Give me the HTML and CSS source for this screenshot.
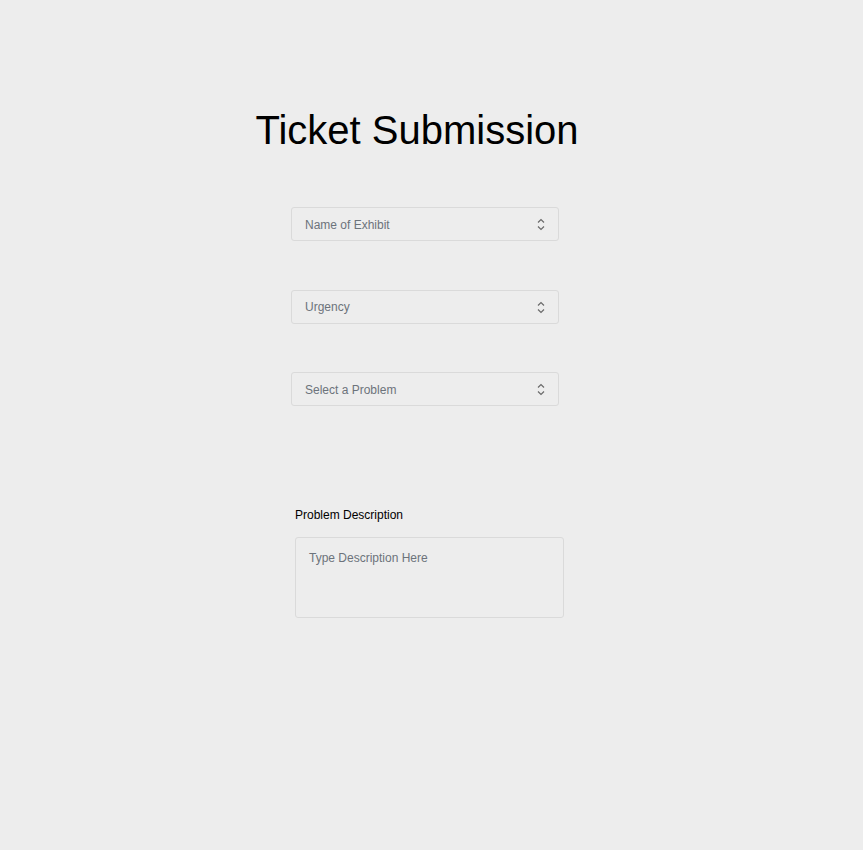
FILE: index.html
```html
<!DOCTYPE html>
<html lang="en">
<head>
<meta charset="utf-8">
<title>Ticket Submission</title>
<link rel="stylesheet" href="styles.css">
</head>
<body>
<main class="page">
  <h1 class="title">Ticket Submission</h1>
  <form class="form">
    <div class="select-wrap">
      <select class="select"><option>Name of Exhibit</option></select>
      <svg class="chev" width="8" height="13" viewBox="0 0 8 13"><polyline points="1,4.5 4,1.5 7,4.5"/><polyline points="1,8.5 4,11.5 7,8.5"/></svg>
    </div>
    <div class="select-wrap">
      <select class="select"><option>Urgency</option></select>
      <svg class="chev" width="8" height="13" viewBox="0 0 8 13"><polyline points="1,4.5 4,1.5 7,4.5"/><polyline points="1,8.5 4,11.5 7,8.5"/></svg>
    </div>
    <div class="select-wrap">
      <select class="select"><option>Select a Problem</option></select>
      <svg class="chev" width="8" height="13" viewBox="0 0 8 13"><polyline points="1,4.5 4,1.5 7,4.5"/><polyline points="1,8.5 4,11.5 7,8.5"/></svg>
    </div>
    <div class="desc">
      <label class="label" for="desc">Problem Description</label>
      <textarea id="desc" class="textarea" placeholder="Type Description Here"></textarea>
    </div>
  </form>
</main>
</body>
</html>
```

FILE: styles.css
```css
html, body {
  margin: 0;
  padding: 0;
  background: #ededed;
  font-family: "Liberation Sans", Arial, sans-serif;
}
.page {
  width: 834px;
  padding-top: 107px;
}
.title {
  margin: 0;
  font-weight: 400;
  font-size: 40px;
  line-height: 46px;
  color: #000;
  text-align: center;
}
.form {
  margin: 54px 0 0 291px;
  width: 272px;
  display: flex;
  flex-direction: column;
  gap: 48.5px;
}
.select-wrap {
  position: relative;
  width: 268px;
}
.select {
  appearance: none;
  -webkit-appearance: none;
  display: block;
  box-sizing: border-box;
  width: 268px;
  height: 34px;
  margin: 0;
  padding: 1px 30px 0 13px;
  border: 1px solid #dadada;
  border-radius: 3px;
  background: #ededed;
  font-family: "Liberation Sans", Arial, sans-serif;
  font-size: 12px;
  color: #6c737b;
  outline: none;
}
.chev {
  position: absolute;
  right: 14px;
  top: 11px;
  pointer-events: none;
  fill: none;
  stroke: #6a6a6a;
  stroke-width: 1.2;
}
.desc {
  margin-top: 53px;
  padding-left: 4px;
  display: flex;
  flex-direction: column;
}
.label {
  font-size: 12px;
  line-height: 14px;
  color: #000;
  margin-bottom: 15px;
}
.textarea {
  box-sizing: border-box;
  width: 269px;
  height: 81px;
  margin: 0;
  padding: 11px 13px;
  border: 1px solid #dadada;
  border-radius: 3px;
  background: #ededed;
  font-family: "Liberation Sans", Arial, sans-serif;
  font-size: 12px;
  line-height: 18px;
  color: #333;
  resize: none;
  outline: none;
}
.textarea::placeholder {
  color: #6c737b;
  opacity: 1;
}
```
